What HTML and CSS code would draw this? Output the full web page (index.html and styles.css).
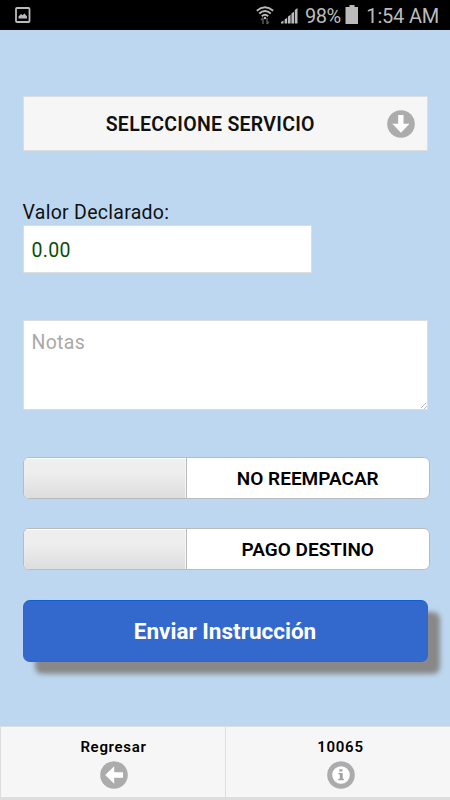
FILE: index.html
```html
<!DOCTYPE html>
<html lang="es">
<head>
<meta charset="utf-8">
<meta name="viewport" content="width=device-width, initial-scale=1">
<title>Instrucción</title>
<link rel="stylesheet" href="styles.css">
</head>
<body>
<div class="screen">
  <header class="status">
    <svg class="status-picture" width="16" height="16" viewBox="0 0 16 16"><rect x="1" y="1" width="13.5" height="14" rx="1" fill="none" stroke="#bbb" stroke-width="1.8"/><path d="M3.5 11.5V9.5L6 7l1.5 1.3L9.5 6.5 12 9.5v2z" fill="#bbb"/></svg>
    <svg class="status-wifi" width="18" height="19" viewBox="0 0 18 19"><g fill="none" stroke="#bbb" stroke-width="1.9"><path d="M.8 4.7Q9-2.2 17.2 4.7"/><path d="M3.2 7.5Q9 2.7 14.8 7.5"/><path d="M5.8 10.2Q9 7.5 12.2 10.2"/></g><circle cx="9" cy="12" r="1.2" fill="#bbb"/><path d="M7 18v-6M5 14l2-2.2M11 12v6M11 18l2-2.2" fill="none" stroke="#555" stroke-width="1.5"/></svg>
    <svg class="status-signal" width="17" height="17" viewBox="0 0 17 17"><g fill="#bbb"><path d="M0 16.5v-1.5l2.5-1.5v3z"/><path d="M3.6 12.5l2.6-1.7v5.7H3.6z"/><path d="M7 9.5l2.6-1.8v8.8H7z"/><path d="M10.4 6.5l2.6-1.8v11.8h-2.6z"/><path d="M13.8 3l2.7-2v15.5h-2.7z"/></g></svg>
    <span class="battery-text">98%</span>
    <svg class="status-battery" width="14" height="19" viewBox="0 0 14 19"><path d="M4.5 0h5v2H13v17H.5V2h4z" fill="#bbb"/></svg>
    <span class="clock">1:54 AM</span>
  </header>

  <main class="form">
    <button class="select" type="button">
      <span class="select-text">SELECCIONE SERVICIO</span>
      <svg class="icon" viewBox="0 0 28 28"><circle cx="14" cy="14" r="13.8" fill="#acacac"/><path d="M11.2 5h5.3v8.8h6L14 22.8 5.3 13.8h5.9z" fill="#fff"/></svg>
    </button>

    <label class="label" for="valor">Valor Declarado:</label>
    <input class="amount" id="valor" type="text" value="0.00">

    <textarea class="notes" placeholder="Notas"></textarea>

    <div class="toggle"><span class="handle"></span><span class="toggle-text">NO REEMPACAR</span></div>
    <div class="toggle"><span class="handle"></span><span class="toggle-text">PAGO DESTINO</span></div>

    <button class="submit" type="button">Enviar Instrucción</button>
  </main>

  <footer class="nav">
    <a class="nav-item">
      <span>Regresar</span>
      <svg class="icon" viewBox="0 0 28 28"><circle cx="14" cy="14" r="13.8" fill="#acacac"/><path d="M23 11.2v5.5h-8.8v6L5.2 14l9-8.8v6z" fill="#fff"/></svg>
    </a>
    <a class="nav-item">
      <span>10065</span>
      <svg class="icon" viewBox="0 0 28 28"><circle cx="14" cy="14" r="11.3" fill="#fff" stroke="#acacac" stroke-width="5"/><path d="M12.3 8.2h3.2v2.4h-3.2zM11.5 12h4.2v5.7h1.2v1.6h-5.6v-1.6h1.5v-4.1h-1.3z" fill="#a2a2a2"/></svg>
    </a>
  </footer>
</div>
</body>
</html>
```
FILE: styles.css
```css
* {
  box-sizing: border-box;
}

body {
  margin: 0;
  font-family: Roboto, sans-serif;
  color: #111;
}

button,
input,
textarea {
  font-family: inherit;
  margin: 0;
  border-radius: 0;
  outline: 0;
}

.screen {
  display: flex;
  flex-direction: column;
  width: 450px;
  height: 800px;
  overflow: hidden;
  background: #bdd7f0;
}

.status {
  display: flex;
  flex: none;
  height: 30px;
  padding: 0 11px 0 15px;
  background: #000;
  color: #bbb;
  font-size: 20px;
  line-height: 32px;
  white-space: nowrap;
}

.status svg {
  flex: none;
}

.status-picture {
  margin-top: 7px;
}

.status-wifi {
  margin: 6px 0 0 225px;
}

.status-signal {
  margin: 7px 0 0 7px;
}

.battery-text {
  width: 40px;
  margin-left: 7px;
  letter-spacing: -0.5px;
}

.status-battery {
  margin-top: 5px;
}

.clock {
  margin-left: auto;
  letter-spacing: -0.2px;
}

.form {
  display: flex;
  flex: 1;
  flex-direction: column;
  align-items: flex-start;
  padding: 66px 20px 0 22.5px;
}

.icon {
  display: block;
  flex: none;
  width: 28px;
  height: 28px;
}

.select {
  display: flex;
  align-items: center;
  width: 405px;
  height: 55px;
  padding: 0 11.5px 0 40px;
  border: 1px solid #ddd;
  background: #f6f6f6;
  color: #111;
}

.select-text {
  flex: 1;
  padding-top: 2px;
  padding-right: 30px;
  font-size: 19.5px;
  font-weight: 600;
  letter-spacing: 0.28px;
  text-align: center;
  white-space: nowrap;
}

.label {
  margin-top: 50px;
  font-size: 19.5px;
  line-height: 24px;
  letter-spacing: 0.28px;
}

.amount {
  width: 289.5px;
  height: 48px;
  padding: 3px 8px 0;
  border: 1px solid #ddd;
  background: #fff;
  color: #064f06;
  font-size: 19.5px;
  letter-spacing: 0.28px;
}

.notes {
  width: 405px;
  height: 90px;
  margin: 47px 0 47px;
  padding: 10px 8px;
  border: 1px solid #ddd;
  background: #fff;
  color: #111;
  font-size: 19.5px;
  line-height: 24px;
  letter-spacing: 0.28px;
}

.notes::placeholder {
  color: #a9a9a9;
}

.notes::-webkit-resizer {
  background: linear-gradient(135deg, transparent 35%, #bbb 35%, #bbb 48%, transparent 48%, transparent 68%, #bbb 68%, #bbb 81%, transparent 81%) right bottom / 6px 6px no-repeat;
}

.toggle {
  display: flex;
  width: 407.5px;
  height: 42px;
  margin-bottom: 29px;
  overflow: hidden;
  border: 1px solid #bbb;
  border-radius: 6px;
  background: #fff;
}

.handle {
  width: 163px;
  border-right: 1px solid #bbb;
  background: linear-gradient(#eee 35%, #ddd);
  box-shadow: inset 0 1px 1px #fff, inset -1px 0 #f5f5f5;
}

.toggle-text {
  flex: 1;
  color: #000;
  font-size: 19px;
  font-weight: 600;
  line-height: 42px;
  text-align: center;
}

.submit {
  width: 405px;
  height: 62px;
  margin-top: 1px;
  border: 1px solid #3366cc;
  border-top-color: #0b60d2;
  border-radius: 7px;
  background: #3369cd;
  box-shadow: 12px 12px 5px #888;
  color: #fff;
  font-size: 22.5px;
  font-weight: 700;
}

.nav {
  display: grid;
  flex: none;
  grid-template-columns: 224px 1fr;
  height: 74px;
  border-top: 1px solid #ddd;
  border-bottom: 3px solid #ddd;
  border-left: 1px solid #ddd;
  background: #f6f6f6;
}

.nav-item {
  display: flex;
  flex-direction: column;
  align-items: center;
  padding-top: 10px;
  padding-left: 1px;
  color: #000;
  font-size: 15px;
  font-weight: 600;
  line-height: 20px;
  letter-spacing: 0.7px;
}

.nav-item + .nav-item {
  padding-left: 5px;
  border-left: 1px solid #ddd;
}

.nav-item .icon {
  margin-top: 4px;
}
```
